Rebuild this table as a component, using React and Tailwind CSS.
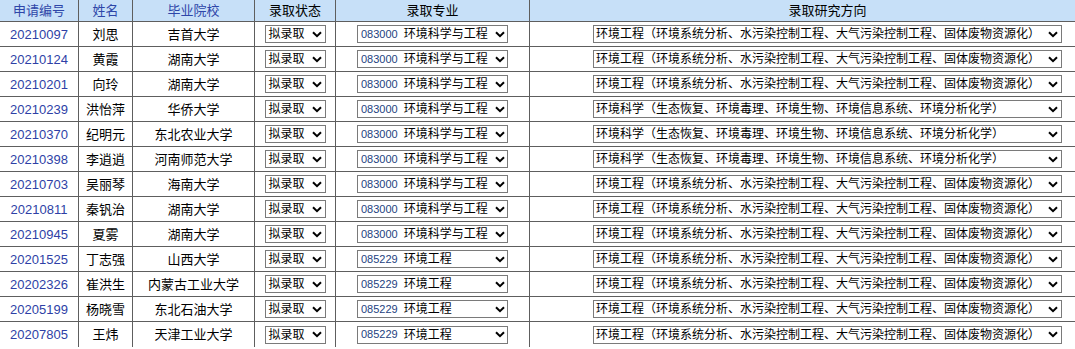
import React from 'react';

const rows = [
  ['20210097', '刘思', '吉首大学', 'A', 'G'],
  ['20210124', '黄霞', '湖南大学', 'A', 'G'],
  ['20210201', '向玲', '湖南大学', 'A', 'G'],
  ['20210239', '洪怡萍', '华侨大学', 'A', 'S'],
  ['20210370', '纪明元', '东北农业大学', 'A', 'S'],
  ['20210398', '李逍逍', '河南师范大学', 'A', 'S'],
  ['20210703', '吴丽琴', '海南大学', 'A', 'G'],
  ['20210811', '秦钒治', '湖南大学', 'A', 'G'],
  ['20210945', '夏雾', '湖南大学', 'A', 'G'],
  ['20201525', '丁志强', '山西大学', 'B', 'G'],
  ['20202326', '崔洪生', '内蒙古工业大学', 'B', 'G'],
  ['20205199', '杨晓雪', '东北石油大学', 'B', 'G'],
  ['20207805', '王炜', '天津工业大学', 'B', 'G'],
];

const majors = {
  A: ['083000', '环境科学与工程'],
  B: ['085229', '环境工程'],
};

const directions = {
  G: '环境工程（环境系统分析、水污染控制工程、大气污染控制工程、固体废物资源化）',
  S: '环境科学（生态恢复、环境毒理、环境生物、环境信息系统、环境分析化学）',
};

const Chevron = () => (
  <svg width="10" height="7" viewBox="0 0 10 7" className="shrink-0">
    <path d="M1 1.2 L5 5.2 L9 1.2" fill="none" stroke="#000" strokeWidth="2" />
  </svg>
);

const Box = ({ className, children }) => (
  <div className={`flex h-[18px] items-center border border-[#7a7a7a] bg-white text-[12px] leading-none text-black ${className}`}>
    {children}
  </div>
);

const Row = ({ header, last, children }) => (
  <div
    className={`flex ${header ? 'h-[22px] bg-[#c7e0f8]' : 'h-[25px] bg-white'} ${last ? '' : 'border-b border-[#5e5e5e]'}`}
  >
    {children}
  </div>
);

const Cell = ({ w, className = '', children }) => (
  <div className={`flex items-center justify-center border-r border-[#5e5e5e] ${w} ${className}`}>{children}</div>
);

export default function App() {
  return (
    <div
      className="h-[349px] w-[1075px] overflow-hidden bg-white text-[13px] leading-none"
      style={{ fontFamily: '"Liberation Sans", "Noto Sans CJK SC", sans-serif' }}
    >
      <div className="w-[1125px]">
        <Row header>
          <Cell w="w-[79px]" className="text-[#2e46a8]">申请编号</Cell>
          <Cell w="w-[54px]" className="text-[#2e46a8]">姓名</Cell>
          <Cell w="w-[122px]" className="text-[#2e46a8]">毕业院校</Cell>
          <Cell w="w-[81px]" className="text-black">录取状态</Cell>
          <Cell w="w-[194px]" className="text-black">录取专业</Cell>
          <div className="flex flex-1 items-center justify-center text-black">录取研究方向</div>
        </Row>
        {rows.map(([id, name, school, m, d], i) => (
          <Row key={id} last={i === rows.length - 1}>
            <Cell w="w-[79px]" className="text-[#2e3fa6]">{id}</Cell>
            <Cell w="w-[54px]" className="text-black">{name}</Cell>
            <Cell w="w-[122px]" className="text-black">{school}</Cell>
            <Cell w="w-[81px]">
              <Box className="w-[61px] pl-[3px] pr-[3px]">
                <span>拟录取</span>
                <span className="ml-auto"><Chevron /></span>
              </Box>
            </Cell>
            <Cell w="w-[194px]">
              <Box className="w-[151px] pl-[3px] pr-[2px]">
                <span className="text-[11px] text-[#243f80]">{majors[m][0]}</span>
                <span className="ml-[6px]">{majors[m][1]}</span>
                <span className="ml-auto"><Chevron /></span>
              </Box>
            </Cell>
            <div className="flex flex-1 items-center justify-center">
              <Box className="w-[469px] pl-[2px] pr-[3px]">
                <span className="whitespace-nowrap">{directions[d]}</span>
                <span className="ml-auto"><Chevron /></span>
              </Box>
            </div>
          </Row>
        ))}
      </div>
    </div>
  );
}
